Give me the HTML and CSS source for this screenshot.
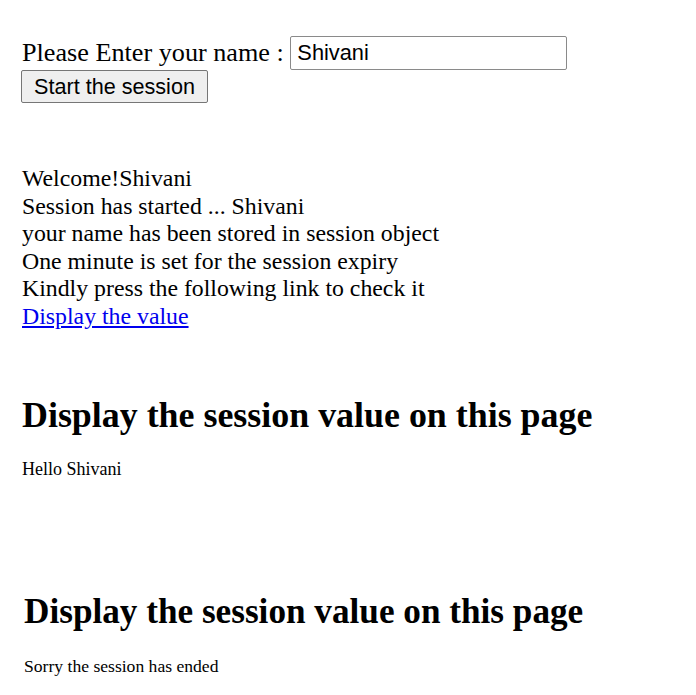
FILE: index.html
```html
<!DOCTYPE html>
<html>
<head>
<meta charset="utf-8">
<link rel="stylesheet" href="styles.css">
</head>
<body>
<section class="form-section">
  <div class="row">
    <span class="label">Please Enter your name : </span><input class="name-input" type="text" value="Shivani">
  </div>
  <button class="start-btn">Start the session</button>
</section>
<section class="started">
  <div>Welcome!Shivani</div>
  <div>Session has started ... Shivani</div>
  <div>your name has been stored in session object</div>
  <div>One minute is set for the session expiry</div>
  <div>Kindly press the following link to check it</div>
  <a class="link" href="#">Display the value</a>
</section>
<section class="display">
  <h1 class="title">Display the session value on this page</h1>
  <p class="msg">Hello Shivani</p>
</section>
<section class="display ended">
  <h1 class="title">Display the session value on this page</h1>
  <p class="msg">Sorry the session has ended</p>
</section>
</body>
</html>
```
FILE: styles.css
```css
html, body {
  margin: 0;
  padding: 0;
  background: #fff;
}
body {
  font-family: "Liberation Serif", "Times New Roman", serif;
  color: #000;
  padding-left: 22px;
}
.form-section {
  padding-top: 35px;
}
.row {
  display: flex;
  align-items: center;
  height: 35px;
}
.label {
  white-space: pre;
  font-size: 26.2px;
}
.name-input {
  box-sizing: border-box;
  width: 277px;
  height: 34px;
  margin: 0;
  padding: 0 6px;
  border: 1px solid #8a8a8a;
  border-radius: 2px;
  font-family: "Liberation Sans", Arial, sans-serif;
  font-size: 21.8px;
  color: #000;
  background: #fff;
}
.start-btn {
  display: block;
  box-sizing: border-box;
  width: 187px;
  height: 33px;
  margin: 0 0 0 -1px;
  padding: 0;
  border: 1px solid #767676;
  border-radius: 2px;
  background: #efefef;
  font-family: "Liberation Sans", Arial, sans-serif;
  font-size: 21.6px;
  color: #000;
}
.started {
  margin-top: 62px;
  font-size: 23.8px;
  line-height: 27.6px;
}
.link {
  color: #0000ee;
  text-decoration: underline;
}
.display {
  margin-top: 64px;
}
.title {
  font-size: 35.9px;
  font-weight: bold;
  margin: 0;
  line-height: 40px;
}
.msg {
  font-size: 18px;
  margin: 24px 0 0 0;
}
.ended {
  margin-top: 112px;
  padding-left: 2px;
}
.ended .title {
  font-size: 35.2px;
}
.ended .msg {
  font-size: 17.6px;
  margin-top: 24px;
}
```
